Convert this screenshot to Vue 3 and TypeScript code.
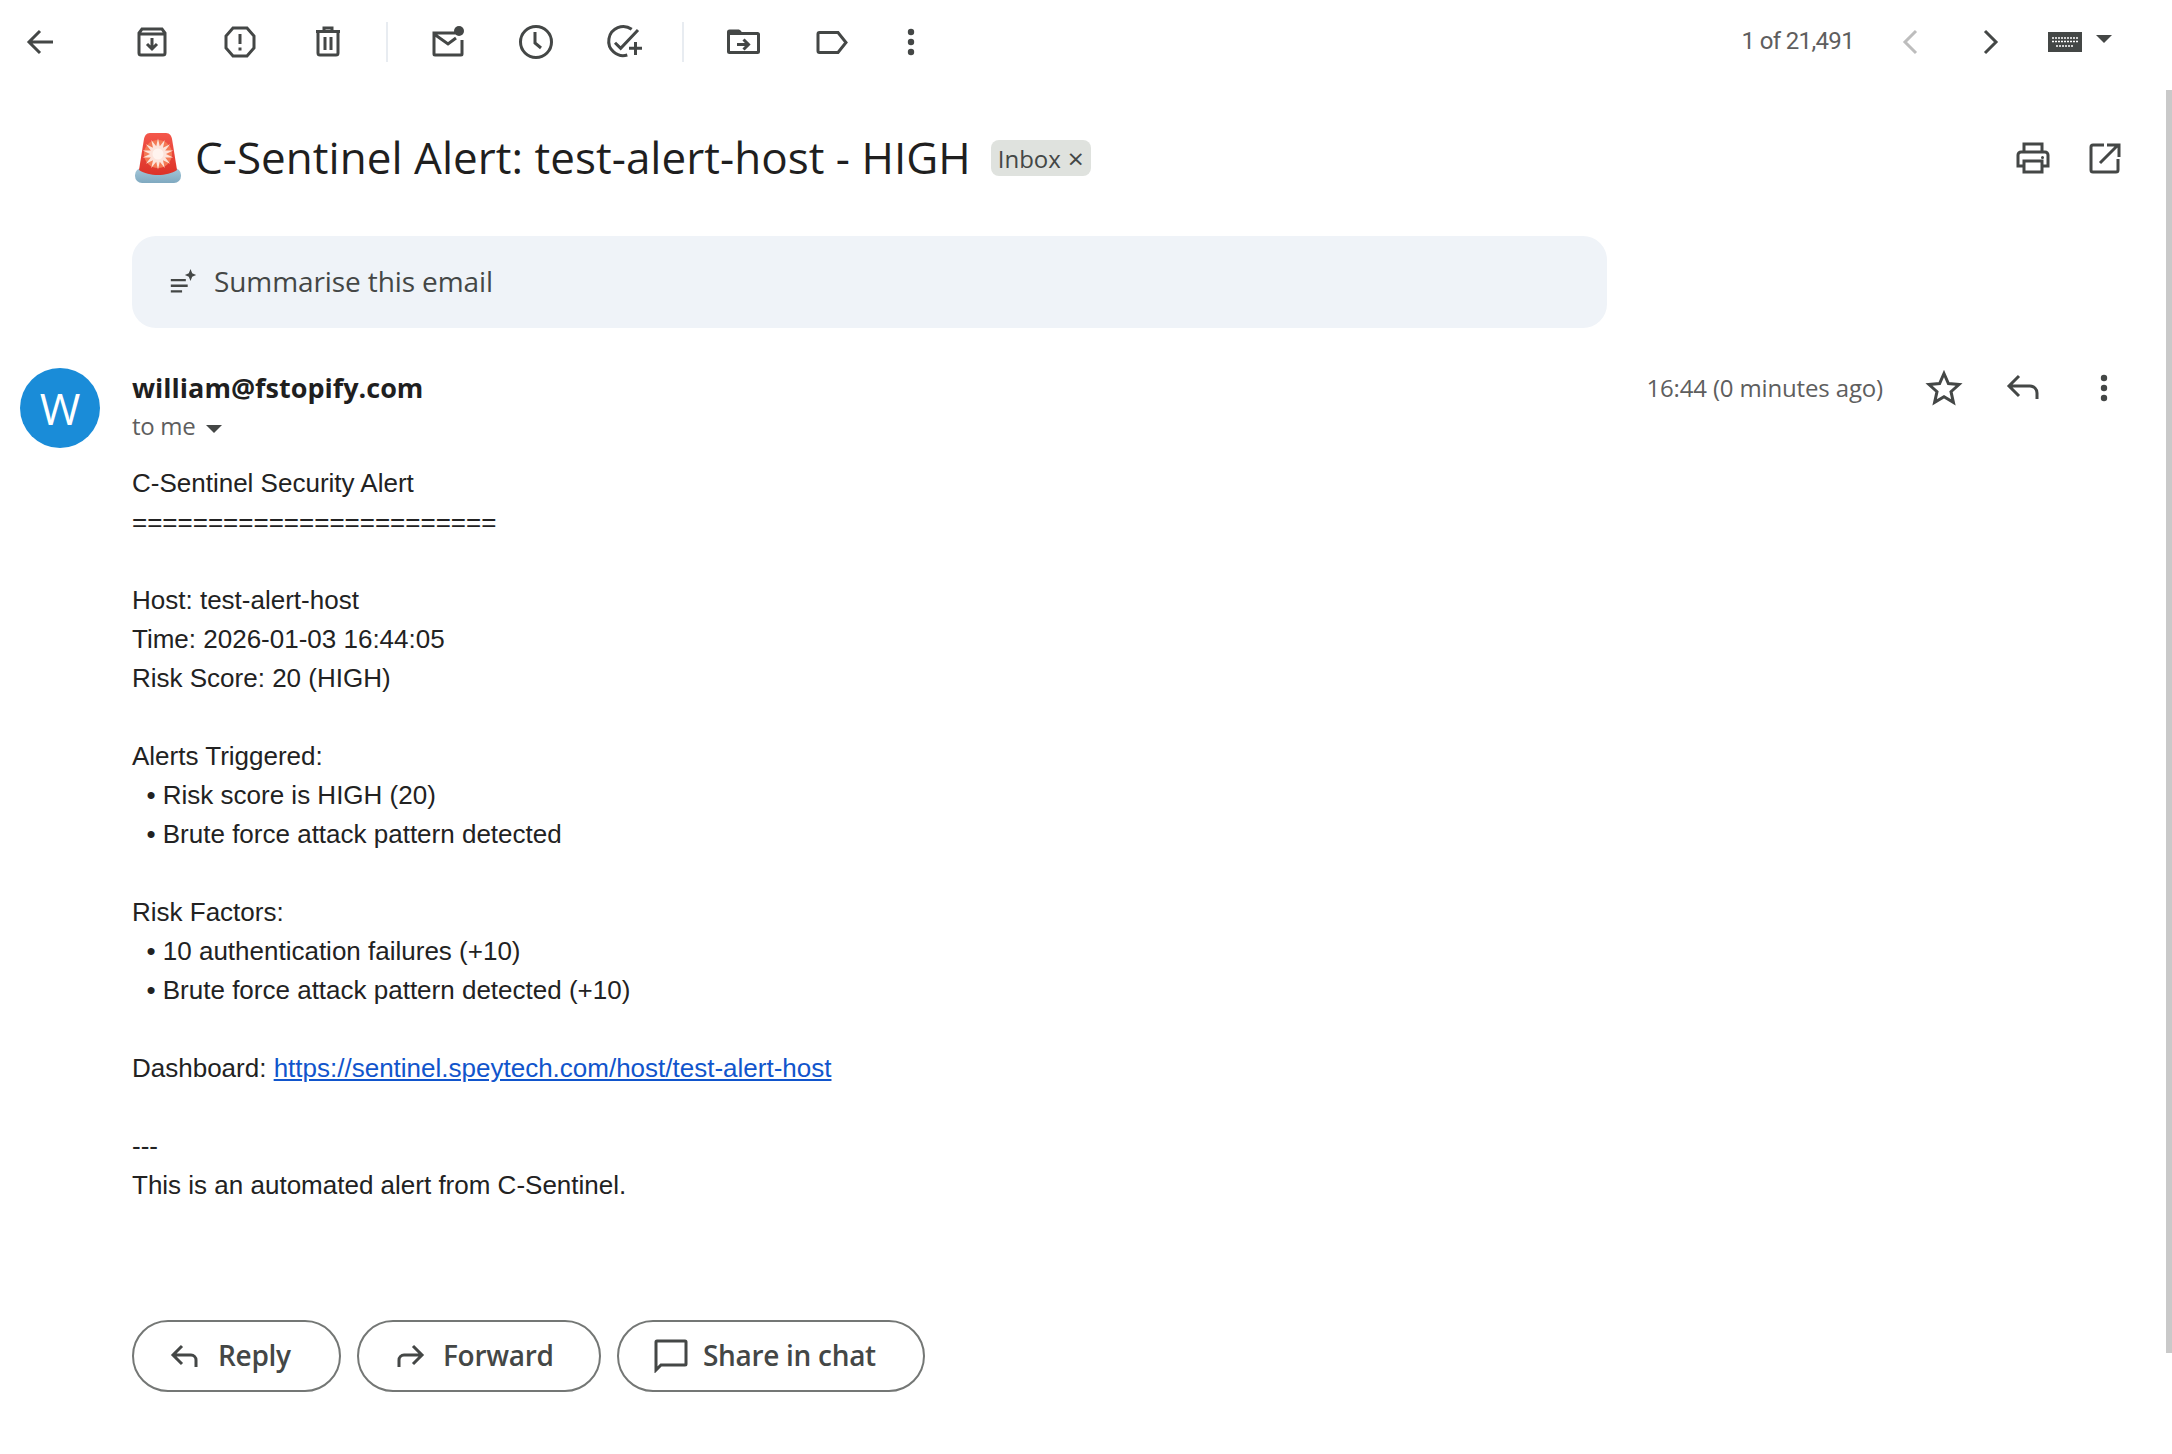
<script setup lang="ts">
const lines: string[] = [
  'C-Sentinel Security Alert',
  '========================',
  '',
  'Host: test-alert-host',
  'Time: 2026-01-03 16:44:05',
  'Risk Score: 20 (HIGH)',
  '',
  'Alerts Triggered:',
  '  • Risk score is HIGH (20)',
  '  • Brute force attack pattern detected',
  '',
  'Risk Factors:',
  '  • 10 authentication failures (+10)',
  '  • Brute force attack pattern detected (+10)',
  '',
]

const flash: string = Array.from({ length: 28 }, (_, i) => {
  const r = i % 2 === 0 ? 15.5 : 8
  const a = (Math.PI * i) / 14
  return `${(24 + r * Math.sin(a)).toFixed(2)},${(22 - r * Math.cos(a)).toFixed(2)}`
}).join(' ')
</script>

<template>
  <div class="page">
    <header class="toolbar">
      <button class="ic back">
        <svg viewBox="0 0 40 40"><path d="M33 20H10M20 9 9 20l11 11" /></svg>
      </button>
      <div class="group g1">
        <button class="ic">
          <svg viewBox="0 0 40 40"><path d="M10 7h20l3 4v20a2 2 0 0 1-2 2H9a2 2 0 0 1-2-2V11zM7 12h26M20 16v10M15 22l5 5 5-5" /></svg>
        </button>
        <button class="ic">
          <svg viewBox="0 0 40 40"><path d="M13 6h14l7 8v12l-7 8H13l-7-8V14zM20 12v10M20 25.500v3" /></svg>
        </button>
        <button class="ic">
          <svg viewBox="0 0 40 40"><path d="M8 9.500h24M16 9V6h8v3M10 10v21a2 2 0 0 0 2 2h16a2 2 0 0 0 2-2V10M17 15v13M23 15v13" /></svg>
        </button>
      </div>
      <span class="sep s1"></span>
      <div class="group g2">
        <button class="ic">
          <svg viewBox="0 0 40 40"><path d="M27 11H6v21a1 1 0 0 0 1 1h26a1 1 0 0 0 1-1V18M6 12l14 10 8-6" /><circle class="fill" cx="31" cy="9" r="5" /></svg>
        </button>
        <button class="ic">
          <svg viewBox="0 0 40 40"><circle cx="20" cy="20" r="15.500" /><path d="M19 10v11l6 5" /></svg>
        </button>
        <button class="ic up">
          <svg viewBox="0 0 40 40"><path d="M27.700 8.300A14.500 14.500 0 1 0 23.300 34M11 21.700l5.700 5.600L34 9M25 27.300h13M31.500 21v13" /></svg>
        </button>
      </div>
      <span class="sep s2"></span>
      <div class="group g3">
        <button class="ic up">
          <svg viewBox="0 0 40 40"><path d="M5.500 12.500h28a1 1 0 0 1 1 1V30.500a1 1 0 0 1-1 1h-28a1 1 0 0 1-1-1V11a1 1 0 0 1 1-1h9l3 3" /><path class="fill" d="M4 9h12l4 5H4z" /><path d="M13 23.500h11M19.500 18.500l5 5-5 5" /></svg>
        </button>
        <button class="ic up">
          <svg viewBox="0 0 40 40"><path d="M8.500 11.500h18.500l8 10-8 10H8.500a1.500 1.500 0 0 1-1.500-1.500V13a1.500 1.500 0 0 1 1.500-1.500z" /></svg>
        </button>
        <button class="ic">
          <svg viewBox="0 0 40 40"><circle class="fill" cx="20" cy="10" r="3.200" /><circle class="fill" cx="20" cy="20" r="3.200" /><circle class="fill" cx="20" cy="30" r="3.200" /></svg>
        </button>
      </div>
      <div class="pager">
        <span class="count">1 of 21,491</span>
        <button class="ic chev dim"><svg viewBox="0 0 40 40"><path d="M25 9 14 20l11 11" /></svg></button>
        <button class="ic chev"><svg viewBox="0 0 40 40"><path d="M15 9l11 11-11 11" /></svg></button>
        <span class="kbd">
          <svg viewBox="0 0 34 20" class="keys">
            <rect class="solid" x="0" y="0" width="34" height="20" />
            <path class="keyrows" d="M4 6h26M4 9.500h26M8 14h18" />
          </svg>
          <span class="caret"></span>
        </span>
      </div>
    </header>

    <div class="subject">
      <svg class="siren" viewBox="0 0 48 52">
        <defs>
          <linearGradient id="domeFill" x1="0" y1="0" x2="0" y2="1">
            <stop offset="0" stop-color="#f4574b" />
            <stop offset="1" stop-color="#dc3228" />
          </linearGradient>
          <linearGradient id="baseFill" x1="0" y1="0" x2="0" y2="1">
            <stop offset="0" stop-color="#a5c8da" />
            <stop offset="1" stop-color="#7fa9c0" />
          </linearGradient>
        </defs>
        <rect x="1" y="36" width="46" height="15" rx="7" fill="url(#baseFill)" />
        <path d="M16 1h16c4 0 5.500 3 6.200 7L43 38c-5 3.500-12 5-19 5S10 41.500 5 38L9.800 8C10.500 4 12 1 16 1z" fill="url(#domeFill)" />
        <circle cx="24" cy="22" r="14" fill="#f47a55" />
        <polygon :points="flash" fill="#fde3da" />
        <circle cx="24" cy="22" r="5.500" fill="#fff3ee" />
      </svg>
      <h1 class="title">C-Sentinel Alert: test-alert-host - HIGH</h1>
      <span class="chip">Inbox <span class="x">×</span></span>
      <div class="subject-actions">
        <button class="ic">
          <svg viewBox="0 0 40 40"><path d="M11 14V6h18v8M11 28H5V17a3 3 0 0 1 3-3h24a3 3 0 0 1 3 3v11h-6M11 23h18v11H11z" /><circle class="fill" cx="29.500" cy="19.500" r="1.500" /></svg>
        </button>
        <button class="ic">
          <svg viewBox="0 0 40 40"><path d="M19 7H8a2 2 0 0 0-2 2v23a2 2 0 0 0 2 2h23a2 2 0 0 0 2-2V21M22 7h12v12M33 7 15 25" /></svg>
        </button>
      </div>
    </div>

    <div class="summary">
      <svg class="spark" viewBox="0 0 32 32">
        <path class="lines" d="M3 14h16M3 20h18M3 26h12" />
        <path class="star" d="M24 2l1.800 4.700L30 8.500l-4.200 1.800L24 15l-1.800-4.700L18 8.500l4.200-1.800z" />
      </svg>
      <span>Summarise this email</span>
    </div>

    <section class="message">
      <div class="avatar">W</div>
      <div class="content">
        <div class="head">
          <div class="who">
            <div class="sender">william@fstopify.com</div>
            <div class="to">to me <span class="caret small"></span></div>
          </div>
          <div class="meta">
            <span class="time">16:44 (0 minutes ago)</span>
            <button class="ic">
              <svg viewBox="0 0 40 40"><path d="M20 5.500l4.400 10 10.600 1-8 7.200 2.400 10.600-9.400-5.600-9.400 5.600 2.400-10.600-8-7.200 10.600-1z" /></svg>
            </button>
            <button class="ic">
              <svg viewBox="0 0 40 40"><path d="M33 31v-6a7 7 0 0 0-7-7H6M15 8 5 18l10 10" /></svg>
            </button>
            <button class="ic">
              <svg viewBox="0 0 40 40"><circle class="fill" cx="20" cy="10" r="3.200" /><circle class="fill" cx="20" cy="20" r="3.200" /><circle class="fill" cx="20" cy="30" r="3.200" /></svg>
            </button>
          </div>
        </div>
        <div class="body">
          <div v-for="(line, i) in lines" :key="i" class="line">{{ line }}</div>
          <div class="line">Dashboard: <a href="#">https://sentinel.speytech.com/host/test-alert-host</a></div>
          <div class="line"></div>
          <div class="line">---</div>
          <div class="line">This is an automated alert from C-Sentinel.</div>
        </div>
        <div class="actions">
          <button class="pill reply">
            <svg viewBox="0 0 36 36"><path d="M28 30v-7a5 5 0 0 0-5-5H6M14 9l-9 9 9 9" /></svg>
            Reply
          </button>
          <button class="pill forward">
            <svg viewBox="0 0 36 36"><path d="M6 30v-7a5 5 0 0 1 5-5h18M20 9l9 9-9 9" /></svg>
            Forward
          </button>
          <button class="pill share">
            <svg viewBox="0 0 36 36"><path d="M3 33V5a1 1 0 0 1 1-1h28a1 1 0 0 1 1 1v22a1 1 0 0 1-1 1H8z" /></svg>
            Share in chat
          </button>
        </div>
      </div>
    </section>
    <div class="scrollbar"></div>
  </div>
</template>

<style scoped>
.page {
  position: relative;
  width: 2172px;
  height: 1454px;
  overflow: hidden;
  background: #fff;
  color: #1f1f1f;
  font-family: "Open Sans", "Liberation Sans", sans-serif;
}
button {
  background: none;
  border: 0;
  padding: 0;
  font: inherit;
  color: inherit;
}
.ic {
  display: block;
  width: 40px;
  height: 40px;
  flex: none;
}
.ic svg,
.pill svg {
  display: block;
  fill: none;
  stroke: #444746;
  stroke-width: 3;
}
.ic svg {
  width: 40px;
  height: 40px;
}
.ic svg .fill {
  fill: #444746;
  stroke: none;
}
.ic.up svg {
  transform: translateY(-1px);
}
.toolbar {
  display: flex;
  align-items: center;
  height: 84px;
  padding-left: 20px;
}
.group {
  display: flex;
  gap: 48px;
}
.g1 {
  margin-left: 72px;
}
.sep {
  width: 2px;
  height: 40px;
  background: #e8ecf1;
}
.s1 {
  margin-left: 38px;
}
.g2 {
  margin-left: 40px;
}
.s2 {
  margin-left: 38px;
}
.g3 {
  margin-left: 40px;
  gap: 47px;
}
.g3 .ic:last-child {
  margin-left: -7px;
}
.pager {
  display: flex;
  align-items: center;
  margin-left: auto;
  padding-right: 60px;
}
.count {
  font-family: Roboto, sans-serif;
  font-size: 24px;
  letter-spacing: -0.65px;
  color: #5e5e5e;
  margin-right: 37px;
  padding-bottom: 2px;
}
.chev.dim svg {
  stroke: #bdbdbd;
}
.chev + .chev {
  margin-left: 39px;
}
.kbd {
  display: flex;
  align-items: center;
  margin-left: 38px;
}
.keys {
  width: 34px;
  height: 20px;
}
.solid {
  fill: #444746;
}
.keyrows {
  stroke: #fff;
  stroke-width: 1.500;
  stroke-dasharray: 2 1;
  fill: none;
}
.caret {
  display: inline-block;
  width: 0;
  height: 0;
  margin-left: 14px;
  border-left: 8px solid transparent;
  border-right: 8px solid transparent;
  border-top: 8px solid #444746;
  margin-top: -6px;
}
.caret.small {
  margin: 0 0 0 5px;
  vertical-align: 2px;
}
.subject {
  display: flex;
  align-items: center;
  height: 72px;
  margin-top: 38px;
  padding-left: 134px;
  padding-right: 47px;
}
.siren {
  width: 48px;
  height: 52px;
  flex: none;
}
.title {
  margin: 0 0 0 13px;
  padding-bottom: 2px;
  font-size: 44px;
  font-weight: 400;
  letter-spacing: 0.03px;
  white-space: nowrap;
}
.chip {
  display: flex;
  align-items: center;
  justify-content: center;
  gap: 7px;
  width: 100px;
  height: 36px;
  margin-left: 20px;
  border-radius: 8px;
  background: #dfe2de;
  color: #444746;
  font-size: 24px;
}
.x {
  font-size: 28px;
  line-height: 1;
}
.subject-actions {
  display: flex;
  gap: 32px;
  margin-left: auto;
}
.summary {
  display: flex;
  align-items: center;
  gap: 16px;
  width: 1475px;
  height: 92px;
  margin: 42px 0 0 132px;
  padding-left: 36px;
  box-sizing: border-box;
  border-radius: 24px;
  background: #eff3f8;
  color: #444746;
  font-size: 28px;
  letter-spacing: -0.1px;
}
.summary span {
  padding-bottom: 2px;
}
.spark {
  width: 30px;
  height: 32px;
  fill: none;
}
.spark .lines {
  stroke: #444746;
  stroke-width: 2.500;
}
.spark .star {
  fill: #444746;
}
.message {
  display: flex;
  margin-top: 40px;
  padding-left: 20px;
}
.avatar {
  flex: none;
  width: 80px;
  height: 80px;
  border-radius: 50%;
  background: #1a8cd8;
  color: #fff;
  font-size: 44px;
  line-height: 80px;
  text-align: center;
}
.content {
  flex: 1;
  margin-left: 32px;
  padding-right: 48px;
}
.head {
  display: flex;
  justify-content: space-between;
}
.sender {
  font-size: 27px;
  font-weight: 700;
  line-height: 39px;
  margin-bottom: 1px;
}
.to {
  font-size: 24px;
  color: #5e5e5e;
  line-height: 36px;
  letter-spacing: -0.3px;
  margin-bottom: 2px;
}
.meta {
  display: flex;
  align-items: center;
  height: 40px;
}
.time {
  font-size: 24px;
  color: #5e5e5e;
  margin-right: 41px;
  letter-spacing: -0.15px;
  padding-bottom: 2px;
}
.meta .ic + .ic {
  margin-left: 40px;
}
.body {
  margin-top: 18px;
  font-family: "Liberation Sans", Arial, sans-serif;
  font-size: 26px;
  line-height: 39px;
  color: #222;
}
.line {
  min-height: 39px;
  white-space: pre;
}
.body a {
  color: #1155cc;
}
.actions {
  display: flex;
  gap: 16px;
  margin-top: 115px;
}
.pill {
  display: flex;
  align-items: center;
  height: 72px;
  box-sizing: border-box;
  border: 2px solid #747775;
  border-radius: 36px;
  padding-bottom: 2px;
  color: #444746;
  font-size: 28px;
  font-weight: 600;
  letter-spacing: -0.3px;
}
.pill svg {
  width: 36px;
  height: 36px;
  margin-right: 14px;
}
.reply {
  width: 209px;
  padding-left: 34px;
}
.forward {
  width: 244px;
  padding-left: 34px;
}
.share {
  width: 308px;
  padding-left: 34px;
}
.scrollbar {
  position: absolute;
  right: 0;
  top: 90px;
  width: 6px;
  height: 1263px;
  background: #c9c9c9;
}
</style>
